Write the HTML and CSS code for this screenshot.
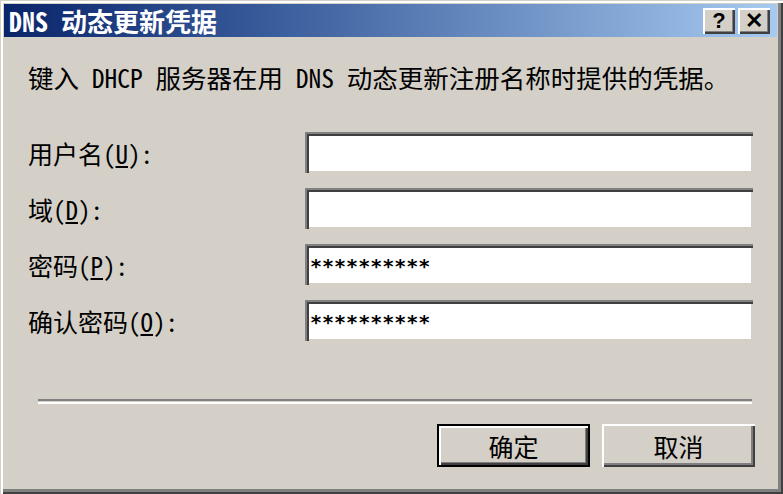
FILE: index.html
```html
<!DOCTYPE html>
<html lang="zh-CN">
<head>
    <meta charset="UTF-8">
    <title>DNS 动态更新凭据</title>
    <link rel="stylesheet" href="styles.css">
</head>
<body>
    <!-- Credentials dialog -->
    <div class="dialog">
        <div class="titlebar">
            <span class="title">DNS 动态更新凭据</span>
            <div class="title-buttons">
                <span class="tbtn">?</span>
                <span class="tbtn">✕</span>
            </div>
        </div>
        <div class="content">
            <p class="intro">键入 DHCP 服务器在用 DNS 动态更新注册名称时提供的凭据。</p>
            <div class="fields">
                <label>用户名(<u>U</u>):</label>
                <div class="field"></div>
                <label>域(<u>D</u>):</label>
                <div class="field"></div>
                <label>密码(<u>P</u>):</label>
                <div class="field"><span class="mask">**********</span></div>
                <label>确认密码(<u>O</u>):</label>
                <div class="field"><span class="mask">**********</span></div>
            </div>
            <div class="separator"></div>
            <div class="actions">
                <button class="btn default">确定</button>
                <button class="btn">取消</button>
            </div>
        </div>
    </div>
</body>
</html>
```

FILE: styles.css
```css
/* Win2000 style dialog */
body {
    margin: 0;
    font-family: "Noto Sans Mono CJK SC", "Noto Sans CJK SC", sans-serif;
    color: #000;
}
.dialog {
    width: 783px;
    height: 494px;
    box-sizing: border-box;
    background: #d4d0c8;
    padding: 4px 6px 0 4px;
    box-shadow: inset 1px 1px #d4d0c8, inset 3px 3px #ffffff, inset -2px -2px #404040, inset -5px -5px #808080;
}
.titlebar {
    height: 33px;
    display: flex;
    align-items: center;
    justify-content: space-between;
    background: linear-gradient(to right, #0a246a 0%, #3a5d9c 35%, #a6caf0 100%);
    padding: 0 7px 0 5px;
}
.title {
    color: #fff;
    font-weight: bold;
    font-size: 26px;
    line-height: 33px;
}
.title-buttons {
    display: flex;
    gap: 3px;
}
.tbtn {
    width: 32px;
    height: 26px;
    box-sizing: border-box;
    background: #d4d0c8;
    display: flex;
    align-items: center;
    justify-content: center;
    font-family: "Liberation Sans", sans-serif;
    font-weight: bold;
    font-size: 22px;
    box-shadow: inset 2px 2px #ffffff, inset -2px -2px #404040, inset -3px -3px #808080;
}
.content {
    padding: 24px 22px 0 24px;
}
.intro {
    margin: 0;
    font-size: 25.5px;
    line-height: 32px;
}
.fields {
    margin-top: 39px;
    display: grid;
    grid-template-columns: 277px 448px;
    grid-auto-rows: 41px;
    row-gap: 15px;
    align-items: center;
}
.fields label {
    font-size: 25px;
    line-height: 30px;
}
.field {
    height: 41px;
    box-sizing: border-box;
    background: #fff;
    display: flex;
    align-items: center;
    padding: 3px 0 0 5px;
    box-shadow: inset 2px 2px #808080, inset 4px 4px #404040, inset -2px -2px #d4d0c8;
}
.mask {
    font-family: "DejaVu Sans Mono", monospace;
    font-size: 20px;
    font-weight: bold;
}
.separator {
    margin: 58px 3px 0 10px;
    height: 1px;
    border-top: 2px solid #808080;
    border-bottom: 2px solid #ffffff;
}
.actions {
    margin-top: 20px;
    display: flex;
    justify-content: flex-end;
    gap: 12px;
    padding-right: 0;
}
.btn {
    width: 153px;
    height: 43px;
    border: none;
    background: #d4d0c8;
    font-family: inherit;
    font-size: 25px;
    padding: 0;
    box-shadow: inset 2px 2px #ffffff, inset -2px -2px #404040, inset -4px -4px #808080;
}
.btn.default {
    box-shadow: inset 0 0 0 2px #000, inset 4px 4px #ffffff, inset -4px -4px #404040, inset -5px -5px #808080;
}
```
